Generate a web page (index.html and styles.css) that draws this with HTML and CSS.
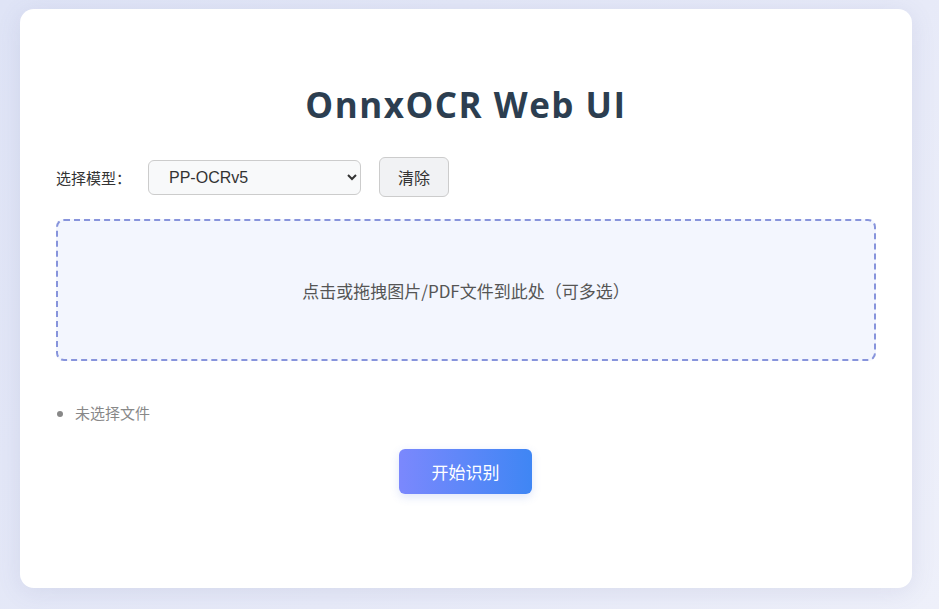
FILE: index.html
```html
<!DOCTYPE html>
<html lang="zh-CN">
<head>
<meta charset="utf-8">
<title>OnnxOCR Web UI</title>
<link rel="stylesheet" href="styles.css">
</head>
<body>
<div class="card">
  <h1 class="title">OnnxOCR Web UI</h1>
  <div class="model-row">
    <label class="model-label" for="model">选择模型：</label>
    <select id="model" class="model-select">
      <option>PP-OCRv5</option>
      <option>PP-OCRv4</option>
    </select>
    <button class="clear-btn" type="button">清除</button>
  </div>
  <div class="drop-zone">点击或拖拽图片/PDF文件到此处（可多选）</div>
  <ul class="file-list">
    <li>未选择文件</li>
  </ul>
  <div class="actions">
    <button class="start-btn" type="button">开始识别</button>
  </div>
</div>
</body>
</html>
```

FILE: styles.css
```css
* { box-sizing: border-box; }
html, body { height: 100%; }
body {
  margin: 0;
  padding: 9px 27px 21px 20px;
  background: linear-gradient(135deg, #dfe4f6 0%, #e7eaf8 60%, #eef0fa 100%);
  font-family: "Noto Sans", "Noto Sans CJK SC", sans-serif;
  color: #333;
}
.card {
  width: 892px;
  height: 579px;
  background: #fff;
  border-radius: 14px;
  box-shadow: 0 4px 24px rgba(90, 100, 160, 0.12);
  padding: 76px 36px 0 36px;
}
.title {
  margin: 0;
  text-align: center;
  font-family: "Open Sans", "Noto Sans", sans-serif;
  font-weight: 700;
  font-size: 35px;
  line-height: 40px;
  letter-spacing: 1.5px;
  color: #2c3e50;
}
.model-row {
  display: flex;
  align-items: center;
  margin-top: 32px;
  height: 40px;
}
.model-label {
  font-family: "Noto Sans CJK SC", sans-serif;
  font-size: 15px;
  color: #333;
  margin-right: 17px;
}
.model-select {
  width: 213px;
  height: 35px;
  padding: 0 16px;
  font-family: "Liberation Sans", Arial, sans-serif;
  font-size: 16px;
  color: #333;
  background: #f8f9fa;
  border: 1px solid #ccc;
  border-radius: 6px;
}
.clear-btn {
  margin-left: 18px;
  width: 70px;
  height: 40px;
  font-family: "Noto Sans CJK SC", sans-serif;
  font-size: 16px;
  color: #333;
  background: #f1f2f4;
  border: 1px solid #ccc;
  border-radius: 6px;
}
.drop-zone {
  margin-top: 22px;
  height: 142px;
  display: flex;
  align-items: center;
  justify-content: center;
  background: #f3f6fe;
  border: 2px dashed #8794dc;
  border-radius: 8px;
  font-family: "Noto Sans CJK SC", sans-serif;
  font-size: 17px;
  color: #555;
}
.file-list {
  margin: 41px 0 0 0;
  padding-left: 19px;
  font-family: "Noto Sans CJK SC", sans-serif;
  font-size: 15px;
  line-height: 22px;
  color: #888;
}
.actions {
  display: flex;
  justify-content: center;
  margin-top: 25px;
}
.start-btn {
  width: 133px;
  height: 45px;
  margin-right: 1px;
  border: none;
  border-radius: 6px;
  background: linear-gradient(90deg, #7b88fd 0%, #3f86f4 100%);
  box-shadow: 0 3px 10px rgba(70, 110, 220, 0.18);
  font-family: "Noto Sans CJK SC", sans-serif;
  font-size: 17px;
  color: #fff;
}
```
